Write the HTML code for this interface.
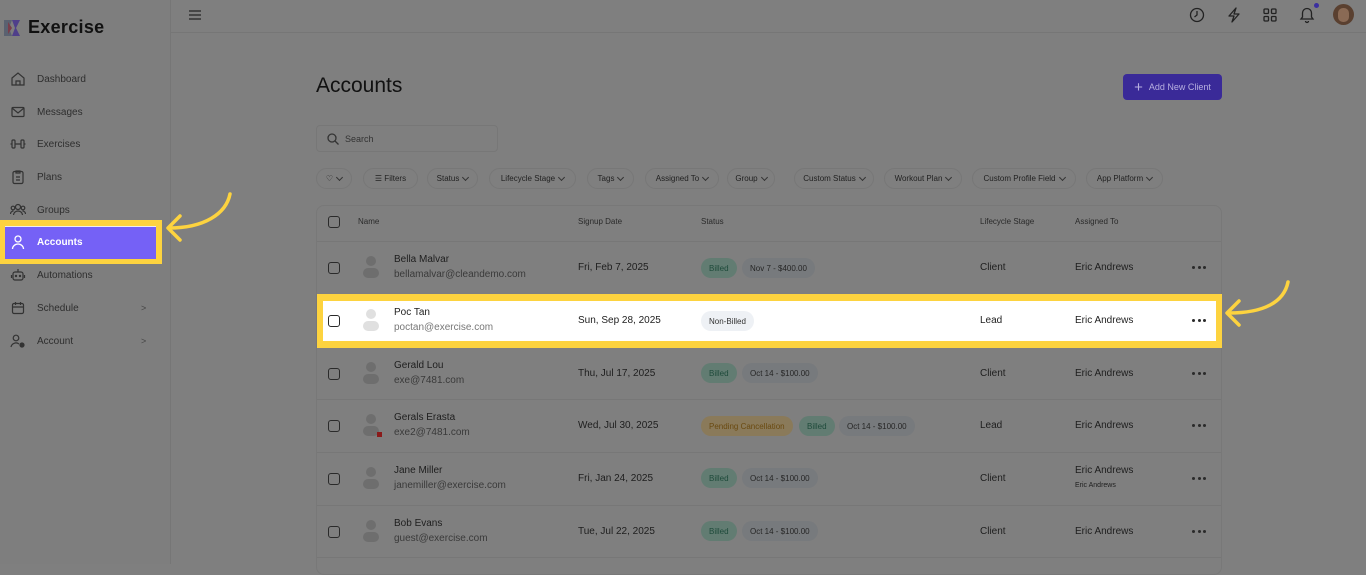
<!DOCTYPE html>
<html><head><meta charset="utf-8"><style>
*{box-sizing:border-box;margin:0;padding:0}
body{width:1366px;height:564px;overflow:hidden;background:#7f7f7f;font-family:"Liberation Sans",sans-serif;color:#1c1c1c;position:relative}
.abs{position:absolute}
.sb{left:0;top:0;width:171px;height:564px;border-right:1px solid #767676;background:#7e7e7e}
.nav{position:absolute;left:10px;font-size:10px;color:#2e2e2e;display:flex;align-items:center}
.nav svg{width:16px;height:16px;margin-right:11px}
.top{left:171px;top:0;right:0;height:33px;border-bottom:1px solid #767676}
.chip{position:absolute;top:168px;height:21px;border:1px solid #777;border-radius:11px;font-size:8px;color:#222;display:flex;align-items:center;justify-content:center;gap:4px;padding:0 4px;white-space:nowrap}
.chip i{display:inline-block;width:5px;height:5px;border-right:1px solid #333;border-bottom:1px solid #333;transform:rotate(45deg);margin-top:-3px}
.card{left:316px;top:205px;width:906px;height:370px;border:1px solid #787878;border-radius:8px;background:#7f7f7f}
.hd{position:absolute;top:217px;font-size:8px;color:#2a2a2a}
.line{position:absolute;left:317px;width:904px;height:1px;background:#777}
.row{position:absolute;left:316px;width:906px;height:53px}
.cb{position:absolute;left:12px;width:12px;height:12px;border:1.5px solid #2a2a2a;border-radius:3px}
.av{position:absolute;left:46px;width:18px;height:24px}
.nm{position:absolute;left:78px;font-size:10px;color:#1e1e1e}
.em{position:absolute;left:78px;font-size:10px;color:#3a3a3a}
.dt{position:absolute;left:262px;font-size:10px;color:#1e1e1e}
.bd{position:absolute;height:20px;border-radius:10px;font-size:8px;display:flex;align-items:center;padding:0 8px;white-space:nowrap}
.bl{background:#627c72;color:#1d4a3a}
.gr{background:#777a7d;color:#262626}
.pd{background:#8a7a5a;color:#6a4a10}
.lc{position:absolute;left:664px;font-size:10px;color:#1e1e1e}
.as{position:absolute;left:759px;font-size:10px;color:#1e1e1e}
.dots{position:absolute;left:876px;width:14px;height:4px;display:flex;justify-content:space-between}
.dots b{width:3px;height:3px;border-radius:50%;background:#2a2a2a}
</style></head><body>
<div class="abs sb"></div>
<div class="abs" style="left:3px;top:19px;width:18px;height:18px">
<svg width="18" height="18"><path d="M1 1h8l-3 8 3 8H1z" fill="#5a6170"/><path d="M9 1h8l-4 8 4 8H9l3-8z" fill="#4f3f8a"/><path d="M5 3l4 6-4 6" fill="#7a3d4a"/></svg></div>
<div class="abs" style="left:28px;top:17px;font-size:18px;color:#111;font-weight:bold;letter-spacing:0.3px">Exercise</div>

<div class="nav" style="top:71px"><svg viewBox="0 0 16 16" fill="none" stroke="#333" stroke-width="1.2"><path d="M2 7l6-5 6 5v7H2z M6 14v-4h4v4"/></svg>Dashboard</div>
<div class="nav" style="top:104px"><svg viewBox="0 0 16 16" fill="none" stroke="#333" stroke-width="1.2"><rect x="2" y="3.5" width="12" height="9" rx="1"/><path d="M2 4l6 5 6-5"/></svg>Messages</div>
<div class="nav" style="top:136px"><svg viewBox="0 0 16 16" fill="none" stroke="#333" stroke-width="1.2"><rect x="2" y="4" width="3" height="8" rx="1"/><rect x="11" y="4" width="3" height="8" rx="1"/><path d="M0.5 8h2M13.5 8h2M5 8h6"/></svg>Exercises</div>
<div class="nav" style="top:169px"><svg viewBox="0 0 16 16" fill="none" stroke="#333" stroke-width="1.2"><rect x="3" y="2.5" width="10" height="12" rx="1.5"/><path d="M6 2h4v2H6zM6 8h4M6 11h4"/></svg>Plans</div>
<div class="nav" style="top:202px"><svg viewBox="0 0 16 16" fill="none" stroke="#333" stroke-width="1.2"><circle cx="8" cy="5" r="2.5"/><circle cx="3" cy="6" r="1.8"/><circle cx="13" cy="6" r="1.8"/><path d="M3.5 13a4.5 4 0 019 0M0.5 12a3 3 0 013-3M15.5 12a3 3 0 00-3-3"/></svg>Groups</div>
<div class="nav" style="top:267px"><svg viewBox="0 0 16 16" fill="none" stroke="#333" stroke-width="1.2"><rect x="3" y="5" width="10" height="8" rx="2"/><path d="M8 2v3M1.5 8v3M14.5 8v3"/><circle cx="6" cy="9" r=".6" fill="#333"/><circle cx="10" cy="9" r=".6" fill="#333"/></svg>Automations</div>
<div class="nav" style="top:300px"><svg viewBox="0 0 16 16" fill="none" stroke="#333" stroke-width="1.2"><rect x="2.5" y="3.5" width="11" height="10" rx="1.5"/><path d="M2.5 7h11M5.5 2v3M10.5 2v3"/></svg>Schedule</div>
<div class="abs" style="left:141px;top:303px;font-size:9px;color:#444">&gt;</div>
<div class="nav" style="top:333px"><svg viewBox="0 0 16 16" fill="none" stroke="#333" stroke-width="1.2"><circle cx="6" cy="5" r="2.8"/><path d="M1 14a5 5 0 018-3"/><circle cx="12" cy="12" r="2" fill="#333"/></svg>Account</div>
<div class="abs" style="left:141px;top:336px;font-size:9px;color:#444">&gt;</div>

<div class="abs" style="left:0;top:220px;width:162px;height:44px;background:#fdd33f"></div>
<div class="abs" style="left:5px;top:226px;width:151px;height:33px;background:#7561f6;border-top:1px solid #eee"></div>
<svg class="abs" style="left:10px;top:234px" width="16" height="16" fill="none" stroke="#fff" stroke-width="1.3"><circle cx="8" cy="5" r="3"/><path d="M2.5 15a5.5 5 0 0111 0"/></svg>
<div class="abs" style="left:37px;top:237px;font-size:10px;color:#fff;font-weight:bold">Accounts</div>
<svg class="abs" style="left:160px;top:188px" width="80" height="60" fill="none" stroke="#fdd33f" stroke-width="3.5" stroke-linecap="round" stroke-linejoin="round"><path d="M70 6C66 26 44 40 9 40"/><path d="M20 28L8 40l12 12"/></svg>

<div class="abs top"></div>
<svg class="abs" style="left:188px;top:8px" width="14" height="14" stroke="#333" stroke-width="1.5"><path d="M1 3h12M1 7h12M1 11h12"/></svg>
<svg class="abs" style="left:1189px;top:7px" width="16" height="16" fill="none" stroke="#222" stroke-width="1.3"><circle cx="8" cy="8" r="6.5"/><path d="M8 4v4l-2.5 2"/></svg>
<svg class="abs" style="left:1226px;top:7px" width="16" height="16" fill="none" stroke="#222" stroke-width="1.3" stroke-linejoin="round"><path d="M10 1L3 9h5l-2 6 7-8H8z"/></svg>
<svg class="abs" style="left:1262px;top:7px" width="16" height="16" fill="none" stroke="#222" stroke-width="1.3"><rect x="2" y="2" width="4.5" height="4.5" rx="1"/><rect x="9.5" y="2" width="4.5" height="4.5" rx="1"/><rect x="2" y="9.5" width="4.5" height="4.5" rx="1"/><rect x="9.5" y="9.5" width="4.5" height="4.5" rx="1"/></svg>
<svg class="abs" style="left:1298px;top:6px" width="18" height="18" fill="none" stroke="#222" stroke-width="1.3"><path d="M3 13h12l-1.5-2V7a4.5 4.5 0 00-9 0v4z M7.5 15a1.5 1.5 0 003 0"/></svg>
<div class="abs" style="left:1314px;top:3px;width:5px;height:5px;border-radius:50%;background:#3b2fa0"></div>
<div class="abs" style="left:1333px;top:4px;width:21px;height:21px;border-radius:50%;background:#5a4030;overflow:hidden"><div style="margin:4px auto;width:11px;height:14px;border-radius:5px;background:#8a6a55"></div></div>

<div class="abs" style="left:316px;top:74px;font-size:21px;color:#111">Accounts</div>
<div class="abs" style="left:1123px;top:74px;width:99px;height:26px;border-radius:4px;background:#3a2a98;color:#b8b0e0;font-size:9px;display:flex;align-items:center;justify-content:center;gap:6px"><span style="font-size:15px;font-weight:300">+</span>Add New Client</div>
<div class="abs" style="left:316px;top:125px;width:182px;height:27px;border:1px solid #777;border-radius:4px;font-size:9px;color:#333;display:flex;align-items:center;padding-left:10px;gap:6px"><svg width="12" height="12" fill="none" stroke="#333" stroke-width="1.3"><circle cx="5" cy="5" r="4"/><path d="M8 8l3.5 3.5"/></svg>Search</div>

<div class="chip" style="left:316px;width:36px">♡<i></i></div>
<div class="chip" style="left:363px;width:55px">☰ Filters</div>
<div class="chip" style="left:427px;width:51px">Status<i></i></div>
<div class="chip" style="left:489px;width:87px">Lifecycle Stage<i></i></div>
<div class="chip" style="left:587px;width:47px">Tags<i></i></div>
<div class="chip" style="left:645px;width:74px">Assigned To<i></i></div>
<div class="chip" style="left:727px;width:48px">Group<i></i></div>
<div class="chip" style="left:794px;width:80px">Custom Status<i></i></div>
<div class="chip" style="left:884px;width:78px">Workout Plan<i></i></div>
<div class="chip" style="left:972px;width:104px">Custom Profile Field<i></i></div>
<div class="chip" style="left:1086px;width:77px">App Platform<i></i></div>

<div class="abs card"></div>
<div class="cb" style="left:328px;top:216px"></div>
<div class="hd" style="left:358px">Name</div>
<div class="hd" style="left:578px">Signup Date</div>
<div class="hd" style="left:701px">Status</div>
<div class="hd" style="left:980px">Lifecycle Stage</div>
<div class="hd" style="left:1075px">Assigned To</div>
<div class="line" style="top:241px"></div>
<div class="line" style="top:294px"></div>
<div class="line" style="top:347px"></div>
<div class="line" style="top:399px"></div>
<div class="line" style="top:452px"></div>
<div class="line" style="top:505px"></div>
<div class="line" style="top:557px"></div>

<div class="abs" style="left:317px;top:294px;width:905px;height:54px;background:#fdd33f"></div>
<div class="abs" style="left:323px;top:301px;width:893px;height:40px;background:#fff"></div>
<svg class="abs" style="left:1222px;top:276px" width="80" height="60" fill="none" stroke="#fdd33f" stroke-width="3.5" stroke-linecap="round" stroke-linejoin="round"><path d="M66 6C62 26 42 37 7 37"/><path d="M17 25L5 37l12 12"/></svg>

<div class="row" style="top:241px">
 <div class="cb" style="top:21px"></div>
 <svg class="av" style="top:14px" viewBox="0 0 18 24" fill="#6e6e6e"><circle cx="9" cy="6" r="5"/><rect x="1" y="13" width="16" height="10" rx="5"/></svg>
 <div class="nm" style="top:13px">Bella Malvar</div><div class="em" style="top:28px">bellamalvar@cleandemo.com</div>
 <div class="dt" style="top:21px">Fri, Feb 7, 2025</div>
 <div class="bd bl" style="left:385px;top:17px">Billed</div><div class="bd gr" style="left:426px;top:17px">Nov 7 - $400.00</div>
 <div class="lc" style="top:21px">Client</div><div class="as" style="top:21px">Eric Andrews</div><div class="dots" style="top:25px"><b></b><b></b><b></b></div>
</div>
<div class="row" style="top:294px">
 <div class="cb" style="top:21px"></div>
 <svg class="av" style="top:14px" viewBox="0 0 18 24" fill="#e0e0e0"><circle cx="9" cy="6" r="5"/><rect x="1" y="13" width="16" height="10" rx="5"/></svg>
 <div class="nm" style="top:13px">Poc Tan</div><div class="em" style="top:28px;color:#777">poctan@exercise.com</div>
 <div class="dt" style="top:21px">Sun, Sep 28, 2025</div>
 <div class="bd" style="left:385px;top:17px;background:#eef1f5;color:#333">Non-Billed</div>
 <div class="lc" style="top:21px">Lead</div><div class="as" style="top:21px">Eric Andrews</div><div class="dots" style="top:25px"><b></b><b></b><b></b></div>
</div>
<div class="row" style="top:347px">
 <div class="cb" style="top:21px"></div>
 <svg class="av" style="top:14px" viewBox="0 0 18 24" fill="#6e6e6e"><circle cx="9" cy="6" r="5"/><rect x="1" y="13" width="16" height="10" rx="5"/></svg>
 <div class="nm" style="top:13px">Gerald Lou</div><div class="em" style="top:28px">exe@7481.com</div>
 <div class="dt" style="top:21px">Thu, Jul 17, 2025</div>
 <div class="bd bl" style="left:385px;top:16px">Billed</div><div class="bd gr" style="left:426px;top:16px">Oct 14 - $100.00</div>
 <div class="lc" style="top:21px">Client</div><div class="as" style="top:21px">Eric Andrews</div><div class="dots" style="top:25px"><b></b><b></b><b></b></div>
</div>
<div class="row" style="top:399px">
 <div class="cb" style="top:21px"></div>
 <svg class="av" style="top:14px" viewBox="0 0 18 24" fill="#6e6e6e"><circle cx="9" cy="6" r="5"/><rect x="1" y="13" width="16" height="10" rx="5"/></svg>
 <div class="abs" style="left:61px;top:33px;width:5px;height:5px;background:#8a1a1a"></div>
 <div class="nm" style="top:13px">Gerals Erasta</div><div class="em" style="top:28px">exe2@7481.com</div>
 <div class="dt" style="top:21px">Wed, Jul 30, 2025</div>
 <div class="bd pd" style="left:385px;top:17px">Pending Cancellation</div><div class="bd bl" style="left:483px;top:17px">Billed</div><div class="bd gr" style="left:523px;top:17px">Oct 14 - $100.00</div>
 <div class="lc" style="top:21px">Lead</div><div class="as" style="top:21px">Eric Andrews</div><div class="dots" style="top:25px"><b></b><b></b><b></b></div>
</div>
<div class="row" style="top:452px">
 <div class="cb" style="top:21px"></div>
 <svg class="av" style="top:14px" viewBox="0 0 18 24" fill="#6e6e6e"><circle cx="9" cy="6" r="5"/><rect x="1" y="13" width="16" height="10" rx="5"/></svg>
 <div class="nm" style="top:13px">Jane Miller</div><div class="em" style="top:28px">janemiller@exercise.com</div>
 <div class="dt" style="top:21px">Fri, Jan 24, 2025</div>
 <div class="bd bl" style="left:385px;top:16px">Billed</div><div class="bd gr" style="left:426px;top:16px">Oct 14 - $100.00</div>
 <div class="lc" style="top:21px">Client</div><div class="as" style="top:13px">Eric Andrews</div><div class="as" style="top:30px;font-size:7px">Eric Andrews</div><div class="dots" style="top:25px"><b></b><b></b><b></b></div>
</div>
<div class="row" style="top:505px">
 <div class="cb" style="top:21px"></div>
 <svg class="av" style="top:14px" viewBox="0 0 18 24" fill="#6e6e6e"><circle cx="9" cy="6" r="5"/><rect x="1" y="13" width="16" height="10" rx="5"/></svg>
 <div class="nm" style="top:13px">Bob Evans</div><div class="em" style="top:28px">guest@exercise.com</div>
 <div class="dt" style="top:21px">Tue, Jul 22, 2025</div>
 <div class="bd bl" style="left:385px;top:16px">Billed</div><div class="bd gr" style="left:426px;top:16px">Oct 14 - $100.00</div>
 <div class="lc" style="top:21px">Client</div><div class="as" style="top:21px">Eric Andrews</div><div class="dots" style="top:25px"><b></b><b></b><b></b></div>
</div>
</body></html>
